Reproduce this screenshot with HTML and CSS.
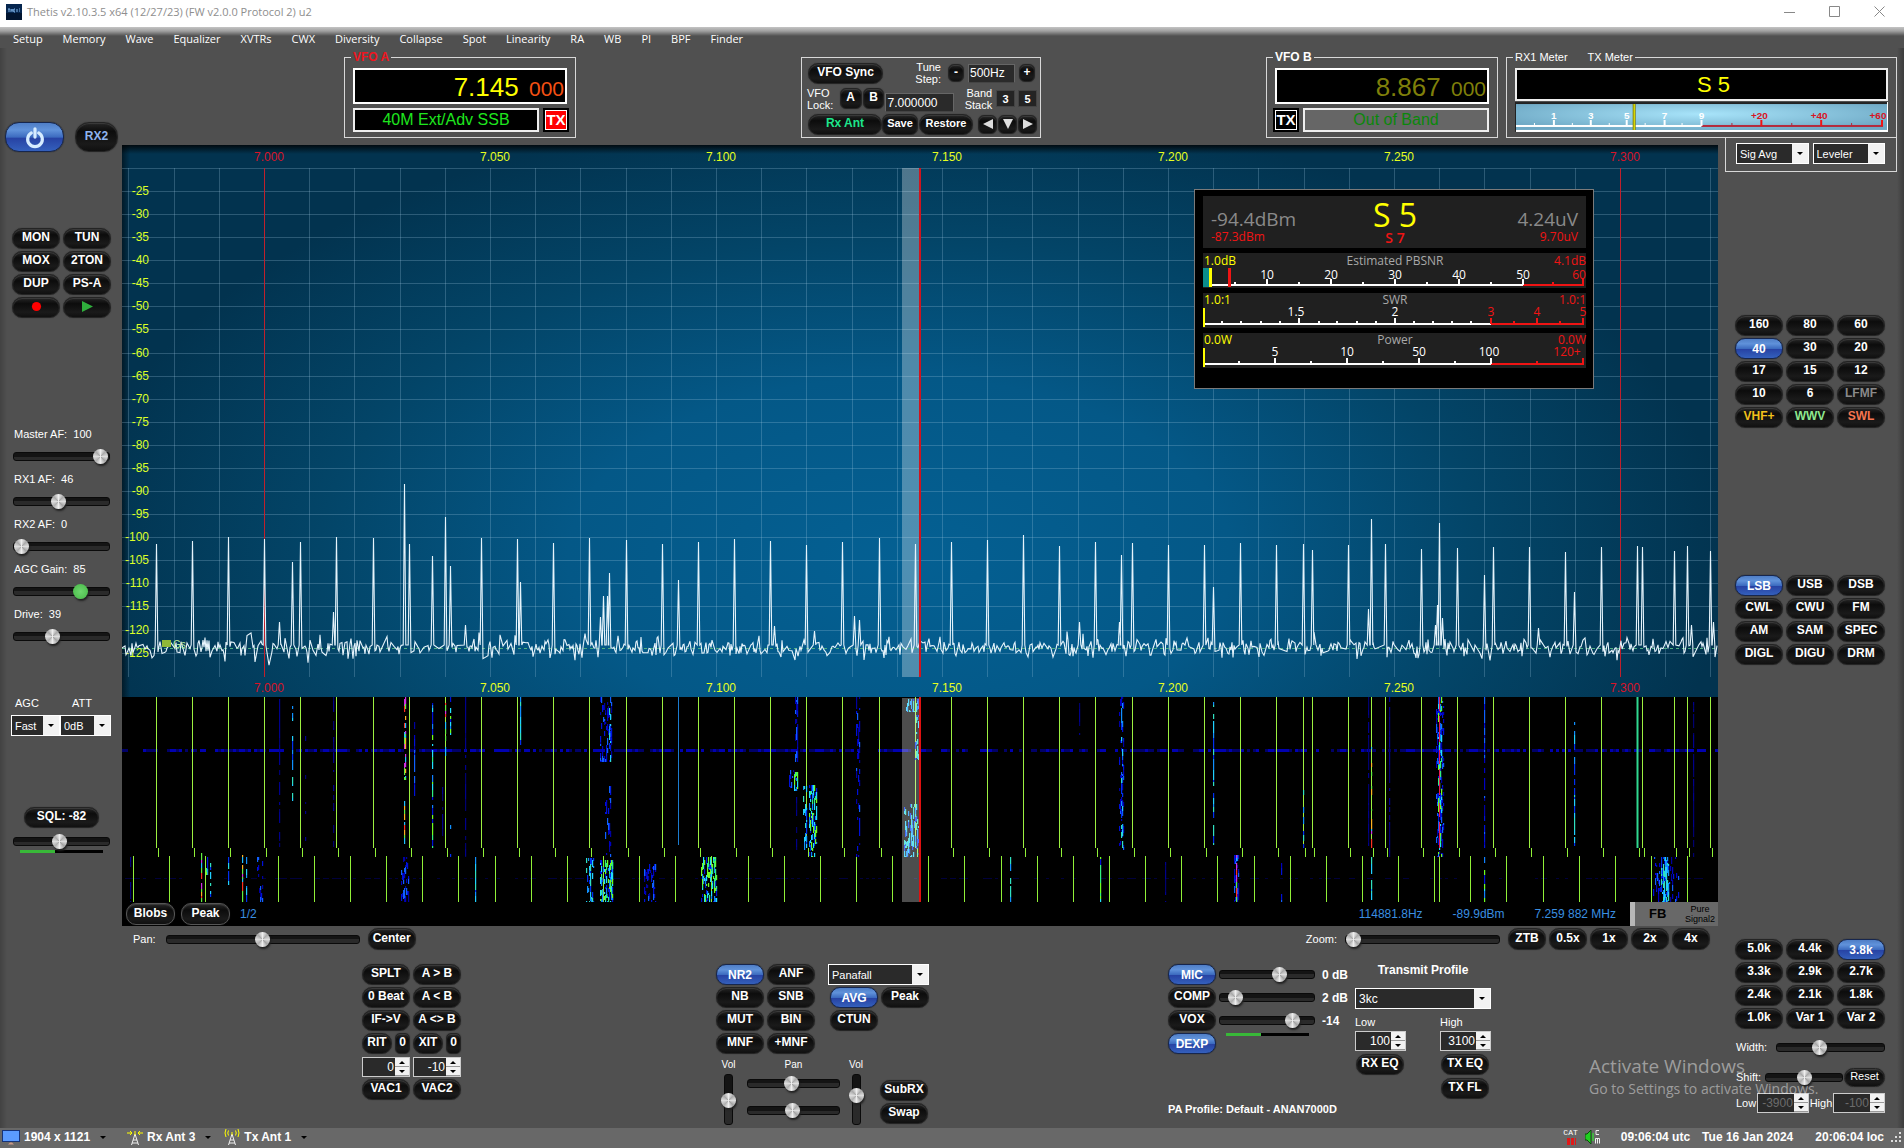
FILE: index.html
```html
<!DOCTYPE html>
<html lang="en">
<head>
<meta charset="utf-8">
<title>Thetis v2.10.3.5 x64</title>
<link rel="stylesheet" href="styles.css">
</head>
<body>
<div class="app">
  <header class="titlebar">
    <svg class="app-icon" viewBox="0 0 16 16" aria-hidden="true"><rect width="16" height="16" fill="#06264f"/><rect y="9" width="16" height="7" fill="#021530"/><path d="M2 5h2M3 5v3M5 5v3M7 5v3M5 6h2M9 5h-1v3h1M11 5v3M13 5h1M13 7h1" stroke="#7fb4ea" fill="none"/></svg>
    <span class="title">Thetis v2.10.3.5 x64 (12/27/23) (FW v2.0.0 Protocol 2) u2</span>
    <div class="win-buttons">
      <button aria-label="Minimize"><svg viewBox="0 0 12 12"><path d="M0 6.500h11"/></svg></button>
      <button aria-label="Maximize"><svg viewBox="0 0 12 12"><path d="M.5 .5h10v10h-10z"/></svg></button>
      <button aria-label="Close"><svg viewBox="0 0 12 12"><path d="M.5 .5l10 10M10.500 .5l-10 10"/></svg></button>
    </div>
  </header>

  <nav class="menu">
    <a href="#">Setup</a><a href="#">Memory</a><a href="#">Wave</a><a href="#">Equalizer</a><a href="#">XVTRs</a><a href="#">CWX</a><a href="#">Diversity</a><a href="#">Collapse</a><a href="#">Spot</a><a href="#">Linearity</a><a href="#">RA</a><a href="#">WB</a><a href="#">PI</a><a href="#">BPF</a><a href="#">Finder</a>
  </nav>

  <aside class="left">
    <div class="power-row">
      <button class="pill power on" aria-label="Power"><svg viewBox="0 0 24 24"><path d="M8 6.500a8 8 0 1 0 8 0M12 2v9" fill="none" stroke="#d6ecff" stroke-width="3.500" stroke-linecap="round"/></svg></button>
      <button class="pill rx2">RX2</button>
    </div>
    <div class="pairs">
      <button class="pill">MON</button><button class="pill">TUN</button>
      <button class="pill">MOX</button><button class="pill">2TON</button>
      <button class="pill">DUP</button><button class="pill">PS-A</button>
      <button class="pill" aria-label="Record"><svg class="glyph" viewBox="0 0 12 12"><circle cx="6" cy="6" r="5" fill="#f00"/></svg></button>
      <button class="pill" aria-label="Play"><svg class="glyph" viewBox="0 0 12 12"><path d="M0 0l12 6-12 6z" fill="#2fae3c"/></svg></button>
    </div>
    <div class="levels">
      <label for="maf">Master AF:&nbsp; 100</label><input id="maf" type="range" value="99">
      <label for="af1">RX1 AF:&nbsp; 46</label><input id="af1" type="range" value="46">
      <label for="af2">RX2 AF:&nbsp; 0</label><input id="af2" type="range" value="0">
      <label for="agcg">AGC Gain:&nbsp; 85</label><input id="agcg" class="green" type="range" value="74">
      <label for="drv">Drive:&nbsp; 39</label><input id="drv" type="range" value="39">
    </div>
    <div class="agc">
      <label for="agc">AGC</label><label for="att">ATT</label>
      <span class="drop"><select id="agc"><option>Fast</option></select></span>
      <span class="drop"><select id="att"><option>0dB</option></select></span>
    </div>
    <div class="sql">
      <button class="pill">SQL: -82</button>
      <input type="range" value="48" aria-label="Squelch">
      <div class="level-bar"></div>
    </div>
  </aside>

  <section class="header">
    <fieldset class="vfo vfo-a">
      <legend>VFO A</legend>
      <div class="freq">7.145 <small>000</small></div>
      <div class="band-row"><div class="band">40M Ext/Adv SSB</div><button class="tx">TX</button></div>
    </fieldset>
    <div class="tuning">
      <div class="t-row t1">
        <button class="pill sync">VFO Sync</button>
        <label for="step">Tune<br>Step:</label>
        <button class="pill pm">-</button>
        <input id="step" type="text" value="500Hz">
        <button class="pill pm">+</button>
      </div>
      <div class="t-row t2">
        <span class="cap">VFO<br>Lock:</span>
        <button class="pill sq">A</button><button class="pill sq">B</button>
        <input type="text" value="7.000000" aria-label="Stored frequency">
        <span class="cap stack">Band<br>Stack</span>
        <button class="num">3</button><button class="num">5</button>
      </div>
      <div class="t-row t3">
        <button class="pill ant">Rx Ant</button><button class="pill save">Save</button><button class="pill restore">Restore</button>
        <div class="arrows">
          <button class="pill" aria-label="Previous"><svg viewBox="0 0 10 10"><path d="M10 0v10L0 5z"/></svg></button>
          <button class="pill" aria-label="Down"><svg viewBox="0 0 10 10"><path d="M0 0h10L5 10z"/></svg></button>
          <button class="pill" aria-label="Next"><svg viewBox="0 0 10 10"><path d="M0 0v10l10-5z"/></svg></button>
        </div>
      </div>
    </div>
    <fieldset class="vfo vfo-b">
      <legend>VFO B</legend>
      <div class="freq">8.867 <small>000</small></div>
      <div class="band-row"><button class="tx">TX</button><div class="band">Out of Band</div></div>
    </fieldset>
    <fieldset class="meter">
      <legend><span>RX1 Meter</span><span>TX Meter</span></legend>
      <div class="reading">S 5</div>
      <svg class="smeter" id="smeter" viewBox="1515 103 374 30" role="img" aria-label="S meter"></svg>
    </fieldset>
  </section>

  <section class="display">
    <svg id="scope" viewBox="122 145 1596 757" role="img" aria-label="Panadapter and waterfall"></svg>
    <div class="scope-bar">
      <button class="pill">Blobs</button><button class="pill">Peak</button><span class="blue">1/2</span>
      <span class="blue hz">114881.8Hz</span><span class="blue">-89.9dBm</span><span class="blue">7.259 882 MHz</span>
      <div class="fb"><b>FB</b><span>Pure<br>Signal2</span></div>
    </div>
  </section>

  <section class="bottom">
    <div class="pan-row">
      <label for="pan">Pan:</label><input id="pan" type="range" value="50"><button class="pill">Center</button>
      <label class="zoom-l" for="zoom">Zoom:</label><input id="zoom" type="range" value="0">
      <div class="zooms"><button class="pill">ZTB</button><button class="pill">0.5x</button><button class="pill">1x</button><button class="pill">2x</button><button class="pill">4x</button></div>
    </div>
    <div class="groups">
      <div class="pairs split">
        <button class="pill">SPLT</button><button class="pill">A &gt; B</button>
        <button class="pill">0 Beat</button><button class="pill">A &lt; B</button>
        <button class="pill">IF-&gt;V</button><button class="pill">A &lt;&gt; B</button>
        <div class="duo"><button class="pill">RIT</button><button class="pill">0</button></div><div class="duo"><button class="pill">XIT</button><button class="pill">0</button></div>
        <span class="spin"><input type="text" value="0" aria-label="RIT offset"><button aria-label="Up"></button><button aria-label="Down"></button></span>
        <span class="spin"><input type="text" value="-10" aria-label="XIT offset"><button aria-label="Up"></button><button aria-label="Down"></button></span>
        <button class="pill">VAC1</button><button class="pill">VAC2</button>
      </div>

      <div class="dsp">
        <div class="dsp-top">
          <div class="pairs">
            <button class="pill on">NR2</button><button class="pill">ANF</button>
            <button class="pill">NB</button><button class="pill">SNB</button>
            <button class="pill">MUT</button><button class="pill">BIN</button>
            <button class="pill">MNF</button><button class="pill">+MNF</button>
          </div>
          <div class="pairs">
            <span class="drop wide"><select aria-label="Display mode"><option>Panafall</option></select></span>
            <button class="pill on">AVG</button><button class="pill">Peak</button>
            <button class="pill">CTUN</button>
          </div>
        </div>
        <div class="dsp-low">
          <div class="mix"><label for="v1">Vol</label><input id="v1" class="vert" type="range" value="48"></div>
          <div class="mix mid"><label for="p1">Pan</label><input id="p1" type="range" value="48"><input type="range" value="49" aria-label="Pan 2"></div>
          <div class="mix"><label for="v2">Vol</label><input id="v2" class="vert" type="range" value="62"></div>
          <div class="subs"><button class="pill">SubRX</button><button class="pill">Swap</button></div>
        </div>
      </div>

      <div class="tx-group">
        <div class="tx-main">
          <div class="gains">
            <button class="pill on">MIC</button><input type="range" value="66" aria-label="Mic gain"><b>0 dB</b>
            <button class="pill">COMP</button><input type="range" value="10" aria-label="Compression"><b>2 dB</b>
            <button class="pill">VOX</button><input type="range" value="82" aria-label="VOX level"><b>-14</b>
            <button class="pill on">DEXP</button><div class="level-bar vox"></div>
          </div>
          <div class="profile">
            <label class="p-title" for="prof">Transmit Profile</label>
            <span class="drop"><select id="prof"><option>3kc</option></select></span>
            <div class="lowhigh">
              <div><label for="lo">Low</label><span class="spin"><input id="lo" type="text" value="100"><button aria-label="Up"></button><button aria-label="Down"></button></span><button class="pill">RX EQ</button></div>
              <div><label for="hi">High</label><span class="spin"><input id="hi" type="text" value="3100"><button aria-label="Up"></button><button aria-label="Down"></button></span><button class="pill">TX EQ</button><button class="pill">TX FL</button></div>
            </div>
          </div>
        </div>
        <b class="pa">PA Profile: Default - ANAN7000D</b>
      </div>
    </div>
  </section>

  <aside class="right">
    <div class="meter-sel">
      <span class="drop"><select aria-label="RX meter"><option>Sig Avg</option></select></span>
      <span class="drop"><select aria-label="TX meter"><option>Leveler</option></select></span>
    </div>
    <div class="trio bands">
      <button class="pill">160</button><button class="pill">80</button><button class="pill">60</button>
      <button class="pill on">40</button><button class="pill">30</button><button class="pill">20</button>
      <button class="pill">17</button><button class="pill">15</button><button class="pill">12</button>
      <button class="pill">10</button><button class="pill">6</button><button class="pill c-gray">LFMF</button>
      <button class="pill c-gold">VHF+</button><button class="pill c-green">WWV</button><button class="pill c-coral">SWL</button>
    </div>
    <div class="trio modes">
      <button class="pill on">LSB</button><button class="pill">USB</button><button class="pill">DSB</button>
      <button class="pill">CWL</button><button class="pill">CWU</button><button class="pill">FM</button>
      <button class="pill">AM</button><button class="pill">SAM</button><button class="pill">SPEC</button>
      <button class="pill">DIGL</button><button class="pill">DIGU</button><button class="pill">DRM</button>
    </div>
    <div class="trio filters">
      <button class="pill">5.0k</button><button class="pill">4.4k</button><button class="pill on">3.8k</button>
      <button class="pill">3.3k</button><button class="pill">2.9k</button><button class="pill">2.7k</button>
      <button class="pill">2.4k</button><button class="pill">2.1k</button><button class="pill">1.8k</button>
      <button class="pill">1.0k</button><button class="pill">Var 1</button><button class="pill">Var 2</button>
    </div>
    <div class="f-row"><label class="w" for="fw">Width:</label><input id="fw" type="range" value="38"></div>
    <div class="f-row"><label for="fs">Shift:</label><input id="fs" type="range" value="50"><button class="pill reset">Reset</button></div>
    <div class="f-row last">
      <label for="fl">Low</label><span class="spin off"><input id="fl" type="text" value="-3900" disabled><button aria-label="Up"></button><button aria-label="Down"></button></span>
      <label for="fh">High</label><span class="spin off"><input id="fh" type="text" value="-100" disabled><button aria-label="Up"></button><button aria-label="Down"></button></span>
    </div>
  </aside>

  <div class="activate"><p>Activate Windows</p><p>Go to Settings to activate Windows.</p></div>

  <footer class="status">
    <svg class="mon" viewBox="0 0 18 15"><rect x=".5" y=".5" width="17" height="11" fill="#5b9bff" stroke="#16337a"/><path d="M6 14.500l2-2h2l2 2z" fill="#c98"/></svg>
    <button>1904 x 1121</button>
    <svg class="antenna" viewBox="0 0 16 16"><path d="M8 5L4.500 16M8 5l3.500 11M6 11h4M5 14h6" stroke="#eee" fill="none"/><path d="M0 4h5M3 2l2 2-2 2M16 4h-5M13 2l-2 2 2 2M8 2v4" stroke="#ff0" fill="none"/></svg>
    <button>Rx Ant 3</button>
    <svg class="antenna" viewBox="0 0 16 16"><path d="M8 5L4.500 16M8 5l3.500 11M6 11h4M5 14h6" stroke="#eee" fill="none"/><path d="M2 0q-2 4 0 8M4.500 1.500q-1.500 2.500 0 5M14 0q2 4 0 8M11.500 1.500q1.500 2.500 0 5M8 3v3" stroke="#ff0" fill="none"/></svg>
    <button>Tx Ant 1</button>
    <span class="cat">CAT<i></i></span>
    <svg class="spk" viewBox="0 0 16 16"><path d="M6 1v14L2 11H0V5h2z" fill="#20d020" stroke="#0a4a0a"/><path d="M8 4v8" stroke="#2f2"/><path d="M14 1.500h-3v4h3M10.500 14.500v-5h4v5M12.500 9.500v5" stroke="#eee" fill="none"/></svg>
    <b class="utc">09:06:04 utc</b><b class="date">Tue 16 Jan 2024</b><b class="loc">20:06:04 loc</b>
    <svg class="grip" viewBox="0 0 12 12"><path d="M10 2v0M10 6v0M6 6v0M10 10v0M6 10v0M2 10v0" stroke="#ddd" stroke-width="2" stroke-linecap="square"/></svg>
  </footer>
</div>
<script src="scope.js"></script>
</body>
</html>
```
FILE: styles.css
```css
* { box-sizing: border-box; }
body { margin: 0; background: #505050; color: #fff; font: 11px/14px "Liberation Sans", Arial, sans-serif; }
button, input, select { font: inherit; color: inherit; margin: 0; padding: 0; border: 0; }
button { background: none; cursor: pointer; white-space: nowrap; }
svg { display: block; }
p { margin: 0; }

.app {
  position: relative;
  display: grid;
  grid-template-columns: 122px 1fr 186px;
  grid-template-rows: 27px 21px 90px auto 1fr 20px;
  min-height: 100vh;
  background: linear-gradient(90deg, #424242, #505050 7px calc(100% - 7px), #3c3c3c);
}

.titlebar { grid-column: 1 / -1; background: #fff; display: flex; align-items: center; padding: 0 18px 4px 6px; color: #8e8e8e; font: 11px/16px "Open Sans", sans-serif; }
.app-icon { width: 16px; height: 16px; margin-right: 5px; }
.win-buttons { margin-left: auto; display: flex; gap: 33px; }
.win-buttons svg { width: 12px; height: 12px; fill: none; stroke: #888; }
.menu { grid-column: 1 / -1; display: flex; gap: 20px; align-items: center; padding: 2px 0 0 13px; background: linear-gradient(#c4c4c4, #a0a0a0 4px, #505050 9px); font: 11px/16px "Open Sans", sans-serif; }
.menu a { color: #fff; text-decoration: none; }

/* Buttons */
.pill { height: 21px; min-width: 0; border-radius: 10px; border: 1px solid #242424; background: linear-gradient(#262626, #0c0c0c 30%, #1a1a1a 75%, #101010); box-shadow: inset 0 1px 1px #3c3c3c, 0 0 1px #222; font-weight: bold; font-size: 12px; line-height: 17px; text-align: center; padding: 0 0 2px; }
.pill.on { background: linear-gradient(#4f7ec6, #6092da 25%, #3d6cc0 50%, #2743a4 55%, #3460bc); border-color: #16264e; box-shadow: 0 0 1px #111; padding: 1px 0 0; }
.pill svg { margin: 0 auto; }
.pairs { display: grid; grid-template-columns: 48px 48px; gap: 2px 3px; align-content: start; }
.trio { display: grid; grid-template-columns: repeat(3, 48px); gap: 2px 3px; padding-left: 17px; }

/* Sliders */
input[type=range] { appearance: none; background: none; width: 100%; height: 18px; min-width: 0; }
input[type=range]::-webkit-slider-runnable-track { height: 9px; border: 1px solid #0a0a0a; border-radius: 3px; background: linear-gradient(#141414 50%, #2a2a2a 50%); }
input[type=range]::-webkit-slider-thumb { appearance: none; width: 15px; height: 15px; margin-top: -4px; border-radius: 50%; background: conic-gradient(#eee, #aaa, #ddd, #a4a4a4, #eee, #b0b0b0, #ddd, #aaa, #eee); box-shadow: 1px 2px 2px #222; }
input.green::-webkit-slider-thumb { background: radial-gradient(#6ed66e, #45b845); }
input[type=range].vert { writing-mode: vertical-lr; direction: rtl; width: 18px; height: 51px; }
input.vert::-webkit-slider-runnable-track { width: 9px; height: 100%; }
input.vert::-webkit-slider-thumb { margin: 0 0 0 -4px; }
.level-bar { height: 3px; background: linear-gradient(90deg, #38b838 42%, #000 42%); }

/* Drop-downs and spin boxes */
.drop { position: relative; display: block; height: 21px; border: 1px solid #fff; background: #2a2a2a; }
.drop select { appearance: none; background: none; width: 100%; height: 19px; padding-left: 3px; }
.drop::before { content: ""; position: absolute; right: 0; top: 0; bottom: 0; width: 16px; background: #f2f2f2; }
.drop::after { content: ""; position: absolute; right: 5px; top: 8px; border: 3px solid transparent; border-top-color: #000; border-bottom: 0; }
.spin { display: grid; grid-template: 9px 9px / 1fr 14px; height: 20px; border: 1px solid #ccc; background: #2a2a2a; }
.spin input { grid-row: 1 / 3; min-width: 0; width: 100%; background: none; text-align: right; padding-right: 1px; font-size: 12px; }
.spin button { background: #f2f2f2; display: grid; place-items: center; border-bottom: 1px solid #999; }
.spin button::after { content: ""; border: 3px solid transparent; border-bottom-color: #000; border-top: 0; }
.spin button:last-child::after { border-top: 3px solid #000; border-bottom: 0; }
.spin.off input { color: #6c6c6c; }

/* Left column */
.left { grid-column: 1; grid-row: 3 / 6; padding-top: 74px; }
.power-row { display: flex; gap: 11px; padding-left: 5px; }
.power-row .pill { height: 30px; border-radius: 14px; }
.power { width: 59px; }
.power svg { width: 22px; height: 22px; }
.rx2 { width: 43px; color: #8fb4ee; }
.left .pairs { margin: 76px 0 0 12px; }
.glyph { width: 11px; height: 11px; }
.levels { margin: 109px 12px 0 13px; display: grid; grid-auto-rows: 14px 31px; }
.levels input { align-self: center; }
.levels label { padding-left: 1px; }
.agc { display: grid; grid-template-columns: 49px 51px; margin: 44px 0 0 11px; gap: 5px 0; }
.agc label { padding-left: 4px; }
.agc label + label { padding-left: 12px; }
.sql { margin: 71px 12px 0 13px; }
.sql .pill { display: block; width: 75px; margin-left: 11px; }
.sql input { display: block; margin-top: 4px; }
.sql .level-bar { margin: 0 7px; }

/* Header */
.header { grid-column: 2 / 4; grid-row: 3; display: grid; grid-template-columns: 222fr 232px 225fr 240px 225fr 232px 8px 391px 7px; padding-top: 2px; }
.vfo, .meter { margin: 0; border: 1px solid #d8d8d8; padding: 4px 8px 4px; min-width: 0; }
.vfo-a { grid-column: 2; }
.vfo-b { grid-column: 6; }
.meter { grid-column: 8; }
legend { line-height: 14px; padding: 0 2px; margin-left: -2px; font-size: 12px; }
.vfo legend { font-weight: bold; }
.vfo-a legend { color: #f0141e; }
.freq { height: 36px; background: #000; border: 2px solid #fff; text-align: right; color: #ff0; font-size: 26px; line-height: 34px; padding-right: 1px; }
.freq small { font-size: 21px; color: #f45013; margin-left: 3px; }
.band-row { display: flex; gap: 4px; margin-top: 4px; }
.vfo-b .band-row { margin-left: -2px; }
.vfo-a .band-row { margin-right: -2px; }
.band { flex: 1; height: 24px; background: #000; border: 2px solid #eee; color: #1ee61e; font-size: 16px; line-height: 20px; text-align: center; }
.vfo-b .freq, .vfo-b .freq small { color: #7f7f0a; }
.vfo-b .band { background: #666; color: #0a870a; }
.tx { width: 26px; height: 24px; font-weight: bold; font-size: 15px; background: #000; outline: 1px solid #fff; outline-offset: -3px; }
.vfo-a .tx { background: #f00; border: 2px solid #000; }
.meter legend { display: flex; gap: 20px; font-size: 11px; }
.reading { height: 33px; background: #000; border: 2px solid #eee; color: #ff0; font-size: 22px; line-height: 29px; text-align: center; padding-left: 24px; }
.smeter { width: 100%; height: 30px; margin-top: 1px; }

.tuning { grid-column: 4; margin-top: 7px; border: 1px solid #d8d8d8; padding: 3px 3px 0 5px; height: 81px; }
.tuning input { background: #2a2a2a; border: 1px solid #666; border-bottom-color: #444; height: 19px; font-size: 12px; padding-left: 1px; }
.t-row { display: flex; }
.t1 { align-items: center; height: 24px; padding-right: 2px; }
.sync { width: 75px; margin-left: 1px; }
.t1 label { margin-left: auto; text-align: right; line-height: 12px; margin-right: 7px; }
.pm { width: 16px; height: 18px; border-radius: 6px; line-height: 14px; }
.tuning .t1 input { width: 47px; margin: 0 4px; }
.t2 { height: 27px; align-items: center; }
.cap { line-height: 12px; width: 33px; }
.sq { width: 22px; border-radius: 6px; margin-right: 1px; }
.tuning .t2 input { width: 69px; margin-top: 8px; }
.stack { text-align: right; width: 38px; margin-right: 4px; }
.num { width: 19px; height: 17px; margin-right: 3px; background: #242424; border: 1px solid #444; font-weight: bold; }
.t2 .num:last-child { margin-right: 0; }
.t3 { align-items: center; padding: 2px 0 0 1px; }
.ant { width: 74px; color: #1ee68c; }
.save { width: 36px; font-size: 11px; border-radius: 7px; margin-right: 1px; }
.restore { width: 54px; font-size: 11px; }
.arrows { margin-left: auto; display: flex; gap: 1px; }
.arrows .pill { width: 19px; height: 19px; border-radius: 6px; }
.arrows svg { width: 10px; height: 10px; fill: #ddd; }

/* Display */
.display { grid-column: 2; grid-row: 4; padding-top: 7px; }
#scope { width: 100%; height: auto; font-size: 12px; background: #000; }
#scope .panel { font-family: "Open Sans", "Noto Sans", sans-serif; }
.scope-bar { display: flex; align-items: center; height: 24px; background: #000; font-size: 12px; padding-left: 4px; }
.scope-bar .pill { width: 49px; height: 22px; border-color: #555; margin-right: 6px; }
.blue { color: #3a8fe0; margin-left: 4px; margin-right: 26px; }
.scope-bar .hz { margin-left: auto; }
.blue:nth-last-child(2) { margin-right: 14px; }
.fb { display: flex; align-items: center; justify-content: space-between; height: 24px; width: 88px; background: #686868; border-left: 5px solid #b8b8b8; color: #000; padding: 0 3px 0 14px; }
.fb b { font-size: 13px; }
.fb span { font-size: 9px; line-height: 10px; text-align: center; }

/* Controls under the display */
.bottom { grid-column: 2; grid-row: 5; padding-top: 2px; }
.pan-row { display: flex; align-items: center; height: 22px; padding: 0 8px 0 11px; }
.pan-row .pill { height: 22px; }
.pan-row > .pill { width: 48px; }
#pan { width: 194px; margin: 0 8px 0 10px; }
.zoom-l { margin-left: auto; }
#zoom { width: 155px; margin: 0 8px; }
.zooms { display: flex; gap: 3px; }
.zooms .pill { width: 38px; }
.groups { display: grid; grid-template-columns: 240fr 99px 255fr 213px 239fr 323px 227fr; padding-top: 14px; }
.split { grid-column: 2; }
.split .spin { margin-top: 1px; }
.duo { display: grid; grid-template-columns: 30px 15px; gap: 3px; }
.duo .pill + .pill { border-radius: 5px; }
.dsp { grid-column: 4; }
.dsp-top { display: flex; justify-content: space-between; }
.drop.wide { grid-column: 1 / 3; margin-left: -2px; }
.dsp-low { display: grid; grid-template-columns: 25px 106px 18px 64px; padding-top: 5px; }
.mix { display: flex; flex-direction: column; align-items: center; font-size: 10px; }
.mix label { line-height: 12px; margin-bottom: 3px; }
.mid { padding: 0 7px 0 6px; }
.mid input { margin-bottom: 9px; }
.subs { display: grid; gap: 2px; align-content: start; padding: 21px 0 0 15px; }
.subs .pill { width: 48px; }
.tx-group { grid-column: 6; }
.tx-main { display: flex; justify-content: space-between; }
.gains { display: grid; grid-template-columns: 48px 96px 30px; grid-auto-rows: 21px; gap: 2px 3px; align-items: center; align-content: start; font-size: 12px; }
.gains b { padding-left: 4px; white-space: nowrap; }
.vox { margin: 0 6px 0 7px; align-self: start; }
.profile { width: 136px; font-size: 12px; }
.p-title { display: block; font-weight: bold; text-align: center; height: 24px; line-height: 13px; }
.lowhigh { display: flex; justify-content: space-between; padding-top: 6px; font-size: 11px; }
.lowhigh > div { width: 51px; display: grid; gap: 2px; align-content: start; }
.lowhigh .pill { width: 48px; margin: 1px 0 0 1px; height: 21px; }
.pa { display: block; margin-top: 3px; font-size: 11px; }

/* Right column */
.right { grid-column: 3; grid-row: 4 / 6; }
.meter-sel { display: flex; gap: 4px; margin: 0 7px; padding: 5px 11px 7px 10px; border: 1px solid #d8d8d8; border-top: 0; }
.meter-sel .drop { flex: 1; }
.bands { margin-top: 143px; }
.modes { margin-top: 147px; }
.filters { margin-top: 274px; }
.c-gray { color: #8a8a8a; }
.c-gold { color: #f2c01c; }
.c-green { color: #8fe88f; }
.c-coral { color: #f57550; }
.f-row { display: flex; align-items: center; height: 18px; margin: 9px 19px 0 18px; }
.f-row + .f-row { margin-top: 12px; }
.f-row input[type=range] { flex: 1; }
.f-row label { width: 29px; flex: none; position: relative; }
.f-row .w { width: 40px; }
.reset { width: 41px; height: 19px; font-weight: normal; font-size: 11px; margin-left: 1px; line-height: 14px; }
.f-row + .last { margin-top: 7px; height: 20px; justify-content: space-between; }
.last label { width: auto; }
.last .spin { width: 52px; }

.activate { position: absolute; right: 79px; bottom: 49px; width: 236px; color: rgba(255, 255, 255, .45); font: 14px/20px "Open Sans", sans-serif; white-space: nowrap; pointer-events: none; }
.activate p:first-child { font-size: 19px; line-height: 26px; }

.status { grid-column: 1 / -1; display: flex; align-items: center; background: #686868; padding: 0 2px 2px; font-weight: bold; font-size: 12px; }
.status button { font-weight: bold; margin-left: 4px; display: flex; align-items: center; gap: 10px; }
.status button::after { content: ""; border: 3px solid transparent; border-top-color: #000; border-bottom: 0; }
.mon { width: 18px; height: 15px; }
.antenna { width: 16px; height: 16px; margin-left: 21px; }
.antenna + button + .antenna { margin-left: 13px; }
.cat { margin-left: auto; font: 8px/8px "Liberation Mono", monospace; }
.cat i { display: block; height: 7px; margin: 1px 2px 0 4px; background: repeating-linear-gradient(90deg, #e01818 0 3px, #686868 3px 4px); }
.spk { width: 16px; height: 16px; margin: 0 20px 0 7px; }
.date { margin: 0 22px 0 12px; }
.grip { width: 12px; height: 12px; margin-left: 6px; }
```
FILE: scope.js
```js
// Draws the panadapter, the waterfall and the meters.
let seed = 20240116;
const rnd = () => ((seed = (seed * 1664525 + 1013904223) >>> 0) / 4294967296);
const rect = (x, y, w, h, f, extra = '') => `<rect x="${x}" y="${y}" width="${w}" height="${h}" fill="${f}" ${extra}/>`;
const text = (x, y, s, f, a = 'start', extra = '') => `<text x="${x}" y="${y}" fill="${f}" text-anchor="${a}" ${extra}>${s}</text>`;
const path = (d, c, extra = '') => `<path d="${d}" stroke="${c}" fill="none" ${extra}/>`;

// Signals: position and top of the trace; the third value marks a carrier line in the waterfall.
const signals = [
  [156, 544, 1], [192, 541, 1], [228, 537, 1], [264, 539, 1], [279, 622], [292, 562], [300, 542, 1], [333, 612], [336, 537, 1], [373, 538, 1],
  [404, 484], [409, 544, 1], [432, 556], [445, 517, 1], [450, 566], [465, 625], [481, 538, 1], [517, 539, 1], [520, 582], [553, 543, 1],
  [589, 538, 1], [600, 617], [603, 596], [607, 596], [609, 573], [626, 540, 1], [662, 544, 1], [678, 580], [698, 542, 1], [734, 539, 1],
  [770, 541, 1], [774, 626], [806, 545, 1], [814, 631], [842, 542, 1], [854, 616], [859, 620], [879, 538, 1], [915, 544, 1], [951, 542, 1],
  [987, 540, 1], [1023, 535, 1], [1059, 546, 1], [1079, 622], [1095, 542, 1], [1119, 622], [1121, 555], [1132, 543, 1], [1168, 545, 1],
  [1204, 545, 1], [1213, 587], [1240, 543, 1], [1276, 545, 1], [1303, 544, 1], [1312, 550, 1], [1348, 545, 1], [1368, 609], [1371, 519, 1],
  [1385, 544, 1], [1421, 549, 1], [1435, 625], [1437, 605], [1439, 523], [1442, 618], [1457, 548, 1], [1484, 575], [1493, 547, 1], [1529, 547, 1],
  [1538, 628], [1565, 552, 1], [1574, 592], [1601, 547, 1], [1637, 546, 1], [1642, 547, 1], [1674, 551, 1], [1687, 546, 1], [1691, 625], [1710, 551, 1], [1713, 622]
];
const lower = [133, 169, 205, 278, 314, 350, 386, 422, 458, 495, 531, 567, 603, 639, 675, 711, 748, 784, 820, 856, 892, 928, 964, 1001, 1037, 1073, 1109, 1145, 1181, 1217, 1254, 1290, 1326, 1362, 1398, 1434, 1439, 1470, 1506, 1543, 1579, 1615, 1651, 1687];

let out = `<defs>
<radialGradient id="sky" gradientUnits="userSpaceOnUse" cx="900" cy="560" r="830" gradientTransform="translate(0 252) scale(1 .55)">
<stop offset="0" stop-color="#046093"/><stop offset=".4" stop-color="#045887"/><stop offset=".7" stop-color="#034568"/><stop offset="1" stop-color="#02334f"/></radialGradient>
<linearGradient id="edge" x2="0" y2="1"><stop stop-color="#000" stop-opacity=".8"/><stop offset="1" stop-opacity="0"/></linearGradient>
<linearGradient id="edgeL"><stop stop-color="#000" stop-opacity=".5"/><stop offset="1" stop-opacity="0"/></linearGradient></defs>`;
out += rect(122, 145, 1596, 552, 'url(#sky)') + rect(122, 145, 1596, 9, 'url(#edge)') + rect(122, 145, 8, 552, 'url(#edgeL)');

// Grid
let grid = '';
for (let i = -3; i <= 32; i++) grid += `M${Math.round(264 + i * 45.2) + .5} 168V677`;
grid += 'M122 168.500H1718';
for (let i = 0; i <= 20; i++) grid += `M122 ${Math.round(191 + i * 23.08) + .5}H1718`;
out += path(grid, '#9cc4dc', 'stroke-opacity=".27"');
out += path('M264.500 168V677M1620.500 168V677', '#c0202c');

// Pass band
out += rect(902, 168, 17, 509, '#fff', 'fill-opacity=".3"');
out += path('M122 648.500H1718', '#4fb080', 'stroke-dasharray="3 3"');
for (let i = 0; i <= 20; i++) out += text(149, Math.round(191 + i * 23.08) + 4, -25 - i * 5, '#dcff28', 'end');

// Trace
const tops = new Map(signals.map(s => [s[0], s[1]]));
let d = 'M122 648', x = 122;
const noise = () => 648 + (rnd() + rnd() + rnd() - 1.5) * 9 - (rnd() > .95 ? 8 : 0) + (rnd() > .95 ? 4 : 0);
while (x < 1718) {
  x++;
  if (tops.has(x)) d += `L${x - .8} 645L${x + .5} ${tops.get(x)}L${x + 1.8} 645`, x++;
  else if (!tops.has(x + 1) && rnd() > .35) d += `L${x} ${noise().toFixed(1)}`;
}
out += path(d, '#e6f4fc', 'stroke-width="1.1"');
out += rect(162, 640, 9, 7, '#90b838') + text(173, 648, 'Gs', '#b8e8a0', 'start', 'font-size="10"');
out += path('M920 168V677', '#d0141e', 'stroke-width="2"');

for (let i = 0; i < 7; i++) {
  const c = i % 6 ? '#e6ff1e' : '#d81428', s = (7 + i * .05).toFixed(3);
  out += text(269 + i * 226, 161, s, c, 'middle') + text(269 + i * 226, 692, s, c, 'middle');
}

// Waterfall
out += rect(122, 697, 1596, 205, '#000');
const cells = {};
const put = (px, py, h, c) => { (cells[c] = cells[c] || []).push(`M${px} ${py}h1.200v${h}h-1.200z`); };
const pal = {
  dim: ['#000070', '#00008c'], blue: ['#0000a0', '#0010d8', '#0000c0', '#1060ff'], cyan: ['#0030f0', '#1090ff', '#20d0ff', '#30e0c0'],
  wild: ['#0010d8', '#1080ff', '#20e0ff', '#30f080', '#70ff20'], hot: ['#ff3020', '#ffb020', '#60f040', '#20c0ff', '#d030e0']
};
const speckle = (x0, x1, y0, y1, density, name) => {
  for (let px = x0; px <= x1; px++)
    for (let py = y0; py < y1;) {
      const h = Math.min(y1 - py, 2 + Math.floor(rnd() * 6));
      if (rnd() < density) put(px, py, h, pal[name][Math.floor(rnd() * pal[name].length)]);
      py += h;
    }
};
for (let px = 122; px < 1718; px += 3) { if (rnd() > .3) out += rect(px, 749, 3, 3, rnd() > .5 ? '#0000b0' : '#000068'); if (rnd() > .6) out += rect(px, 878, 3, 1, '#00003c'); }
[[279, 697, 848, .7, 'dim'], [333, 697, 848, .7, 'dim'], [442, 780, 857, .6, 'dim'], [465, 697, 857, .8, 'dim'], [1079, 697, 735, .6, 'dim'], [1368, 697, 848, .8, 'dim'], [1389, 697, 857, .9, 'dim'], [1693, 697, 857, .7, 'dim'],
 [305, 697, 848, .2, 'dim'], [414, 722, 796, .7, 'blue'], [432, 697, 848, .8, 'wild'], [450, 697, 745, .8, 'wild'], [450, 825, 857, .6, 'cyan'], [520, 697, 745, .9, 'cyan'], [1484, 697, 848, .8, 'blue'],
 [1213, 697, 845, .8, 'cyan'], [1574, 722, 848, .8, 'cyan'], [292, 697, 825, .45, 'cyan']].forEach(a => speckle(a[0], a[0], a[1], a[2], a[3], a[4]));
speckle(404, 405, 697, 780, .75, 'hot'); speckle(404, 404, 801, 845, .8, 'hot');
speckle(600, 611, 697, 762, .32, 'blue'); speckle(609, 610, 697, 762, .6, 'cyan'); speckle(605, 610, 783, 857, .3, 'blue');
speckle(795, 797, 697, 762, .4, 'blue'); speckle(788, 794, 770, 788, .3, 'blue'); speckle(794, 797, 772, 791, .7, 'wild'); speckle(796, 796, 791, 850, .6, 'dim');
speckle(803, 806, 786, 850, .5, 'cyan'); speckle(809, 816, 785, 857, .55, 'wild');
speckle(856, 859, 697, 857, .3, 'blue'); speckle(906, 919, 699, 712, .45, 'cyan'); speckle(915, 919, 715, 760, .3, 'cyan'); speckle(904, 919, 804, 857, .45, 'cyan');
speckle(1119, 1123, 697, 850, .3, 'blue'); speckle(1121, 1122, 697, 850, .5, 'cyan');
speckle(1436, 1443, 697, 857, .35, 'blue'); speckle(1438, 1441, 697, 857, .4, 'wild');
speckle(401, 408, 857, 902, .4, 'blue'); speckle(475, 475, 857, 902, 1, 'cyan'); speckle(586, 593, 858, 902, .35, 'cyan'); speckle(600, 612, 860, 902, .5, 'wild'); speckle(610, 612, 860, 902, .8, 'wild');
speckle(644, 655, 864, 902, .28, 'blue'); speckle(701, 716, 857, 902, .5, 'wild'); speckle(201, 201, 853, 902, .8, 'hot'); speckle(206, 207, 857, 875, .8, 'wild'); speckle(210, 210, 857, 902, .6, 'cyan'); speckle(242, 242, 855, 902, .9, 'hot'); speckle(228, 228, 857, 902, .7, 'cyan'); speckle(246, 246, 857, 902, .6, 'cyan'); speckle(257, 262, 857, 902, .25, 'blue'); speckle(130, 130, 857, 902, .7, 'dim');
speckle(1010, 1010, 857, 902, .8, 'cyan'); speckle(1100, 1100, 857, 902, .9, 'wild'); speckle(1165, 1165, 857, 902, .7, 'dim'); speckle(1234, 1238, 855, 902, .5, 'blue'); speckle(1236, 1236, 855, 902, .9, 'hot');
speckle(1281, 1281, 857, 902, .6, 'blue'); speckle(1371, 1371, 857, 902, .8, 'cyan'); speckle(1484, 1484, 857, 902, .9, 'wild'); speckle(1653, 1678, 857, 902, .2, 'blue'); speckle(1661, 1668, 857, 902, .7, 'cyan');

let green = '', low = '';
signals.filter(s => s[2]).forEach(s => { green += `M${s[0] + .5} 697V848`; low += `M${s[0] + 2.500} 848V857`; });
lower.forEach(v => { low += `M${v + .5} 856V902`; });
out += path(green, '#9cf040') + path(low, '#90f038');
out += path('M678.500 697V845', '#1c7cd0') + path('M1637.500 697V848', '#30d890', 'stroke-width="2"');
speckle(445, 445, 697, 762, .8, 'hot'); speckle(1303, 1303, 760, 848, .5, 'cyan'); speckle(1371, 1371, 740, 848, .5, 'hot');
for (const c in cells) out += `<path d="${cells[c].join('')}" fill="${c}"/>`;
out += path('M1439.500 697V857', '#e81850', 'stroke-dasharray="14 5 26 8"');
out += rect(902, 698, 17, 204, '#fff', 'fill-opacity=".3"') + path('M920 697V902', '#e01010', 'stroke-width="2"');

// Floating multimeter
const W = '#fff', R = '#f01414', Y = '#ff0', G = '#a8a8a8';
out += '<g class="panel">' + rect(1194.5, 189.5, 399, 199, '#000', 'stroke="#7a7a7a"');
[[196, 52], [253, 35], [293, 35], [333, 35]].forEach(([y, h]) => { out += rect(1203, y, 383, h, '#202020'); });
out += text(1211, 226, '-94.4dBm', '#8a8a8a', 'start', 'font-size="19"') + text(1578, 226, '4.24uV', '#8a8a8a', 'end', 'font-size="19"')
  + text(1395, 227, 'S 5', Y, 'middle', 'font-size="32" font-weight="500"') + text(1395, 243, 'S 7', R, 'middle', 'font-size="14" font-weight="600"')
  + text(1211, 241, '-87.3dBm', R) + text(1578, 241, '9.70uV', R, 'end');
const scale = (y, name, a, b, split, marks, minor) => {
  out += text(1204, y, a, Y) + text(1395, y, name, G, 'middle') + text(1586, y, b, R, 'end');
  const ly = y + 20;
  out += rect(1204, ly - 1, split - 1204, 2, W) + rect(split, ly - 1, 1584 - split, 2, R);
  marks.forEach(([mx, s, tx]) => { out += text(tx || mx, y + (name === 'Estimated PBSNR' ? 14 : 12), s, mx > split || s === '3' ? R : W, 'middle') + rect(mx - 1, ly - 6, 2, 6, mx > split || s === '3' ? R : W); });
  minor.forEach(mx => { out += rect(mx - 1, ly - 3, 2, 3, mx > split ? R : W); });
};
scale(265, 'Estimated PBSNR', '1.0dB', '4.1dB', 1523, [[1267, '10'], [1331, '20'], [1395, '30'], [1459, '40'], [1523, '50'], [1583, '60', 1579]], [1235, 1299, 1363, 1427, 1491, 1553]);
scale(304, 'SWR', '1.0:1', '1.0:1', 1491, [[1299, '1.5', 1296], [1395, '2'], [1491, '3'], [1537, '4'], [1583, '5']], [1222, 1241, 1261, 1280, 1319, 1337, 1357, 1376, 1414, 1433, 1452, 1471, 1514, 1560]);
scale(344, 'Power', '0.0W', '0.0W', 1491, [[1275, '5'], [1347, '10'], [1419, '50'], [1491, '100', 1489], [1583, '120+', 1567]], [1239, 1311, 1383, 1455, 1537]);
out += rect(1203, 268, 6, 19, '#0a8c8c') + rect(1209, 268, 3, 19, Y) + rect(1228, 268, 3, 19, R) + rect(1203, 308, 2, 19, Y) + rect(1203, 348, 2, 19, Y) + '</g>';
document.getElementById('scope').innerHTML = out;

// Analogue S meter
let m = `<defs><radialGradient id="glow" cx=".5" cy=".4" r=".6"><stop stop-color="#a8e4fa"/><stop offset="1" stop-color="#6ea8c4"/></radialGradient></defs>`;
m += rect(1515, 103, 374, 30, 'url(#glow)') + rect(1515, 103, 374, 2, '#222') + rect(1515, 131, 374, 2, W) + rect(1515, 103, 1, 30, '#222') + rect(1888, 103, 1, 30, W);
m += rect(1516, 126, 186, 2, W) + rect(1702, 126, 182, 2, '#b42a3c');
[[1554, '1'], [1591, '3'], [1627, '5'], [1665, '7'], [1702, '9']].forEach(([px, s]) => { m += rect(px - 1, 121, 2, 6, W) + text(px, 120, s, W, 'middle', 'font-size="10" font-weight="bold"'); });
[1534, 1572, 1609, 1645, 1682].forEach(px => { m += rect(px, 124, 1, 3, W); });
[[1762, '+20', 1760], [1822, '+40', 1820], [1883, '+60', 1879]].forEach(([px, s, tx]) => { m += rect(px - 1, 121, 2, 6, R) + text(tx, 120, s, '#d81424', 'middle', 'font-size="10" font-weight="bold"'); });
[1732, 1792, 1852].forEach(px => { m += rect(px, 124, 1, 3, '#b42a3c'); });
m += rect(1633, 105, 3, 26, '#7a7a10') + rect(1634, 105, 1, 26, Y);
document.getElementById('smeter').innerHTML = m;
```
